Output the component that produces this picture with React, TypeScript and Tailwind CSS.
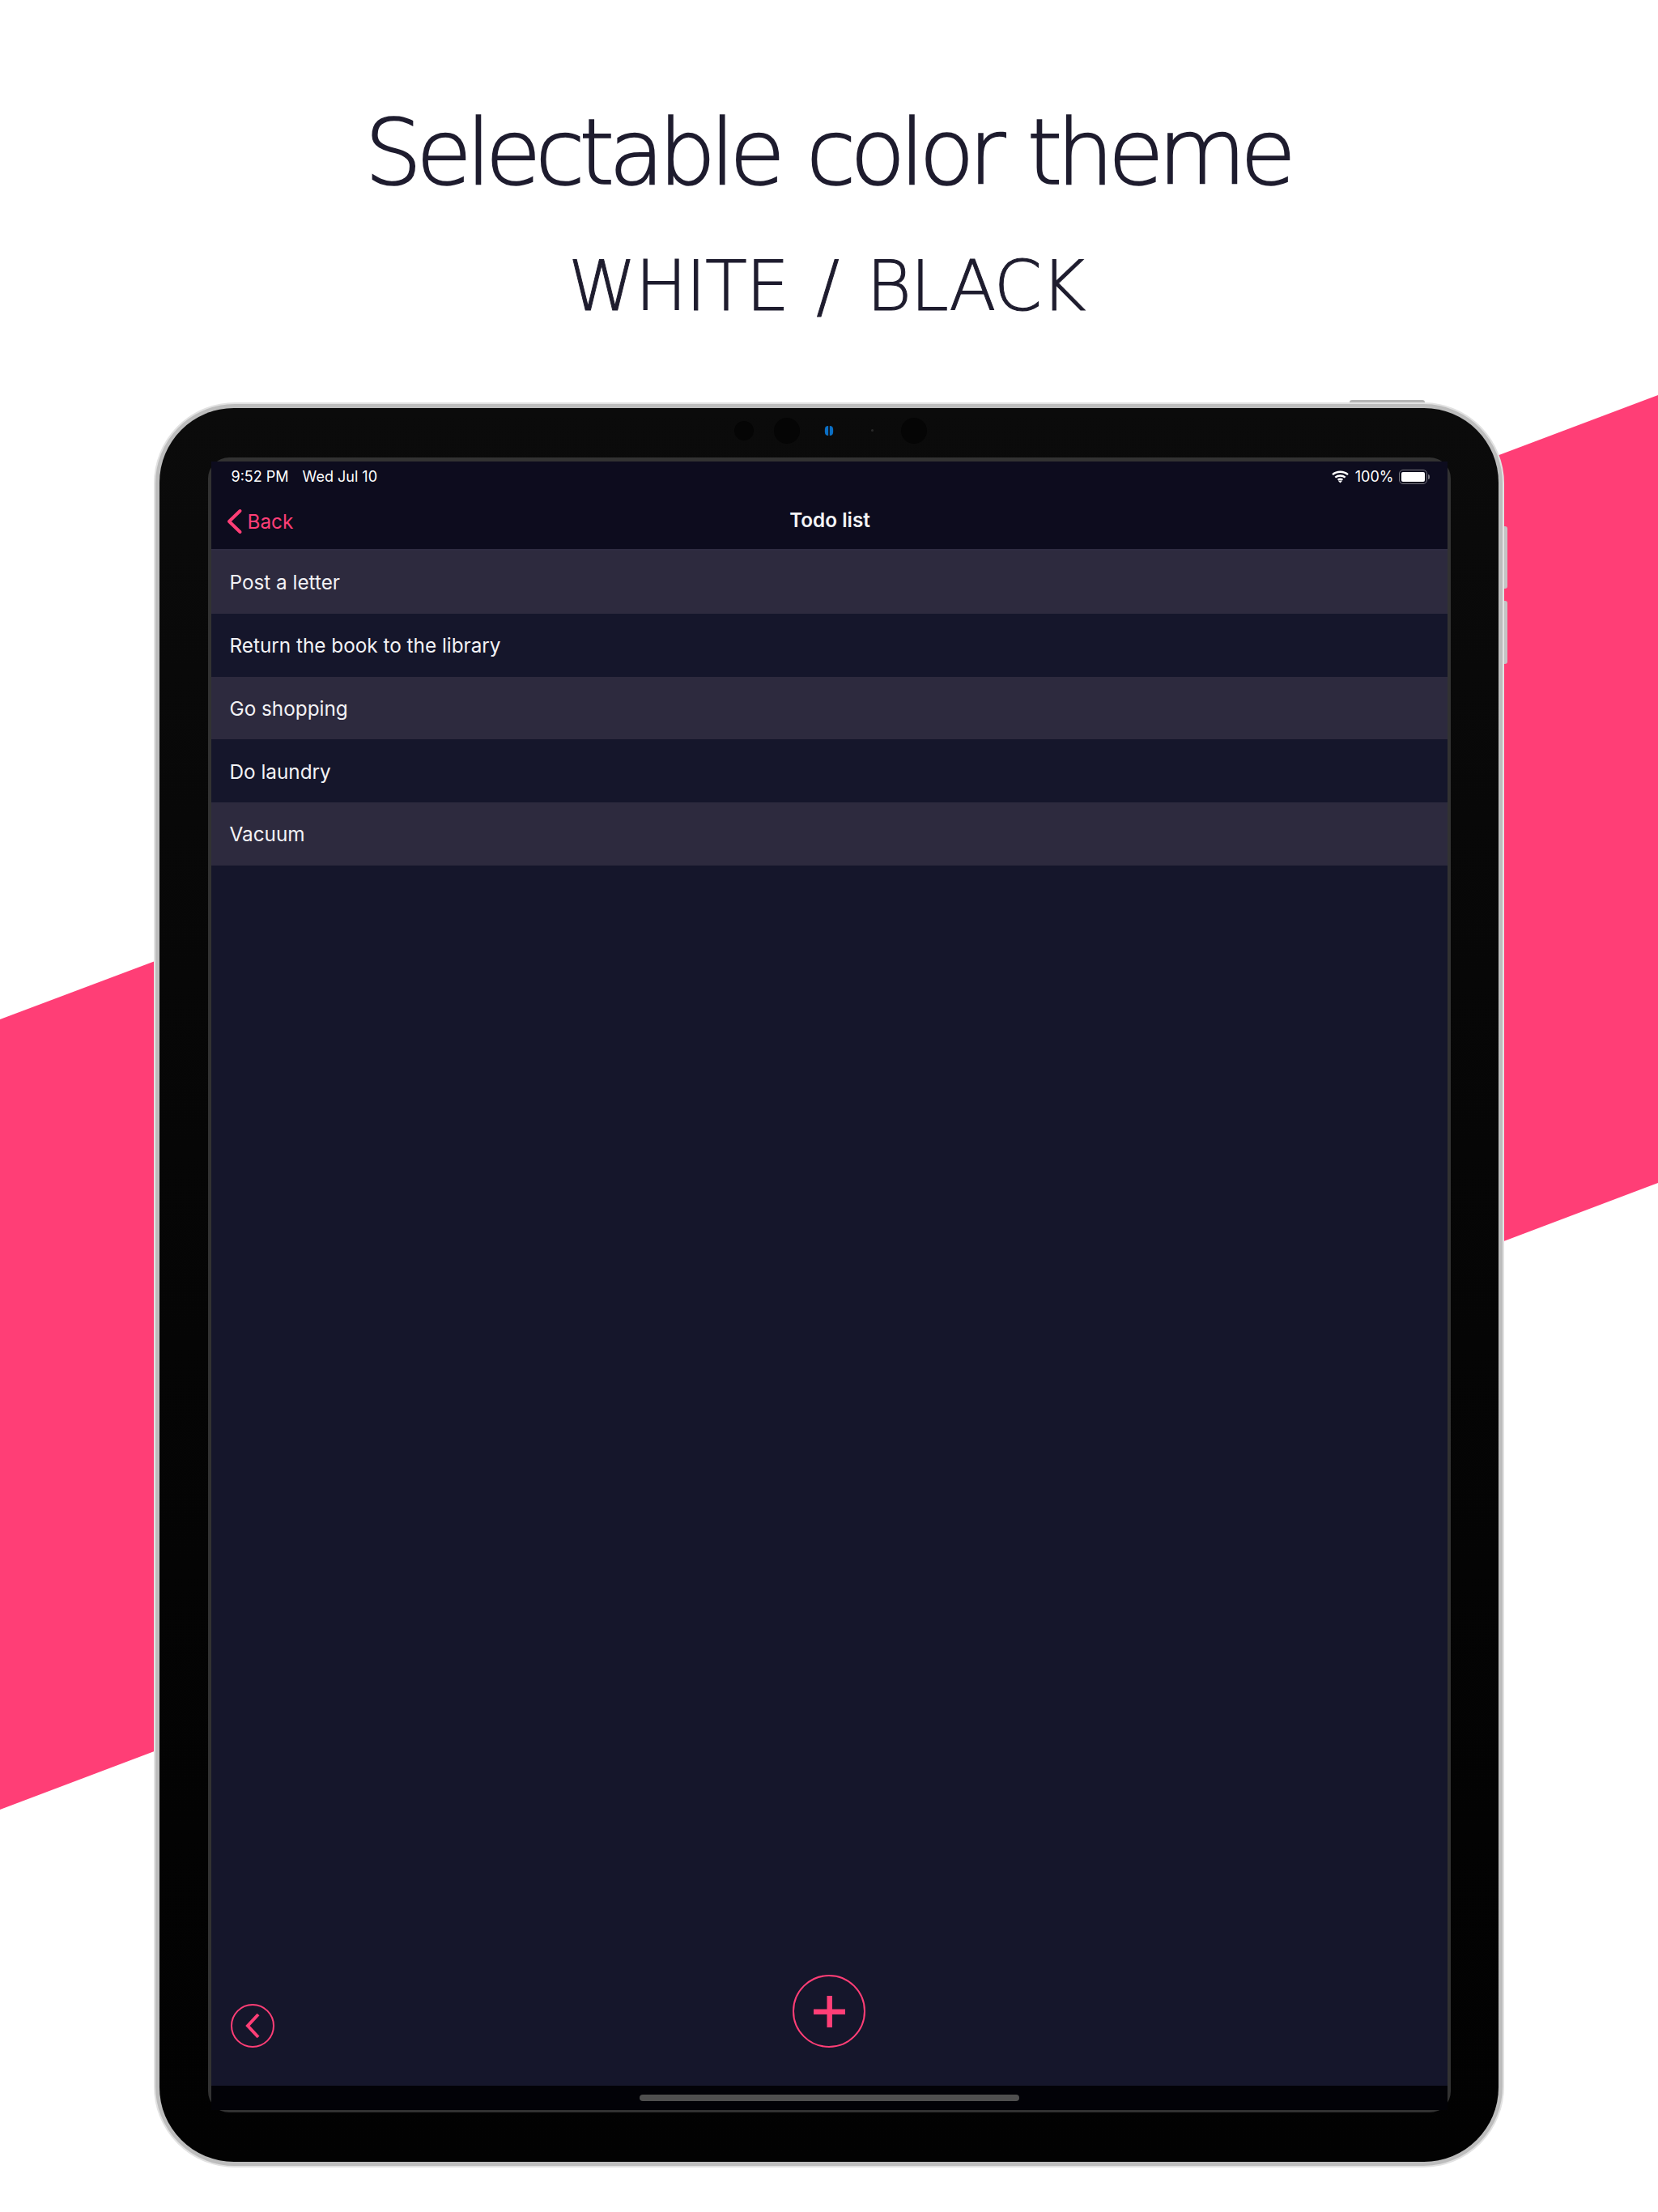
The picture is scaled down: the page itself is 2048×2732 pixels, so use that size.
const todos = ['Post a letter', 'Return the book to the library', 'Go shopping', 'Do laundry', 'Vacuum'];

function WifiIcon() {
  return (
    <svg width="21" height="16" viewBox="0 0 21 16" fill="none" stroke="#fff" strokeWidth="2.4">
      <path d="M1 5.2C6.4 .6 14.6 .6 20 5.2" />
      <path d="M4.3 8.6C7.8 5.8 13.2 5.8 16.7 8.6" />
      <path d="M7.6 11.8C9.3 10.6 11.7 10.6 13.4 11.8" />
      <path d="M10.5 15.6 8.2 13.2C9.6 12.4 11.4 12.4 12.8 13.2Z" fill="#fff" stroke="none" />
    </svg>
  );
}

function Battery() {
  return (
    <div className="flex items-center ml-[6px]">
      <div className="w-[35px] h-[18px] rounded-[5px] border border-[#77767f] p-[2px]">
        <div className="w-full h-full rounded-[2px] bg-white" />
      </div>
      <div className="ml-[1px] w-[2px] h-[6px] rounded-r-full bg-[#77767f]" />
    </div>
  );
}

function TodoRow({ label, striped }: { label: string; striped: boolean }) {
  return (
    <div className={`h-[77.8px] flex items-center pl-[23px] pt-[1px] text-[24.3px] text-[#f2f2f5] ${striped ? 'bg-[#2d2a3e]' : 'bg-[#15162b]'}`}>
      {label}
    </div>
  );
}

export default function App() {
  return (
    <div className="relative w-[2048px] h-[2732px] overflow-hidden bg-white font-['Inter',sans-serif]">
      {/* diagonal band behind the tablet */}
      <svg className="absolute inset-0" width="2048" height="2732" viewBox="0 0 2048 2732">
        <polygon points="0,1259 2048,488 2048,1461 0,2235" fill="#ff3e76" />
      </svg>

      <div className="relative">
        <header className="h-[497px] text-center text-[#1e1c2e] font-['DejaVu_Sans',sans-serif] font-extralight">
          <h1 className="pt-[113px] pr-[4px] text-[112px] leading-[150px] tracking-[-7.3px] [word-spacing:5px] [-webkit-text-stroke:1.6px_#1e1c2e]">Selectable color theme</h1>
          <p className="mt-[31px] pr-[6px] text-[85px] leading-[120px] tracking-[-1.4px] [word-spacing:9px] [-webkit-text-stroke:1px_#1e1c2e]">WHITE / BLACK</p>
        </header>

        <div className="relative mx-auto w-[1668px] h-[2180px]">
          {/* hardware buttons */}
          <div className="absolute left-[1477px] -top-[3px] w-[93px] h-[6px] rounded-t-[3px] bg-[#b5b5b5]" />
          <div className="absolute -right-[4px] top-[153px] w-[8px] h-[77px] rounded-r-[3px] bg-[#c4c4c4]" />
          <div className="absolute -right-[4px] top-[245px] w-[8px] h-[78px] rounded-r-[3px] bg-[#c4c4c4]" />

          <div className="relative h-full rounded-[100px] bg-[#bdbdbd] border-2 border-[#e2e2e2] p-[5px]">
            <div className="flex flex-col items-center h-full rounded-[92px] bg-gradient-to-b from-[#0b0b0b] to-[#020202]">
              {/* camera strip */}
              <div className="h-[61px] w-full flex items-center pb-[6px]">
                <div className="ml-[710px] w-[24px] h-[24px] rounded-full bg-[#050505]" />
                <div className="ml-[25px] w-[32px] h-[32px] rounded-full bg-[#050505]" />
                <div className="ml-[30px] w-[12px] h-[12px] rounded-full flex justify-between px-[1px] bg-[#101a26]">
                  <div className="w-[4px] h-full rounded-l-full bg-[#0a6fc4]" />
                  <div className="w-[4px] h-full rounded-r-full bg-[#0a6fc4]" />
                </div>
                <div className="ml-[46px] w-[3px] h-[3px] rounded-full bg-[#2a2a2a]" />
                <div className="ml-[34px] w-[32px] h-[32px] rounded-full bg-[#050505]" />
              </div>

              <div className="w-[1535px] h-[2044px] rounded-[26px] border-x-[4px] border-t-[5px] border-b-[3px] border-[#323232]">
                <div className="flex flex-col h-full bg-[#15162b]">
                  <div className="h-[110px] shrink-0 bg-[#0d0c1e] border-b-2 border-[#2f2c42]">
                    <div className="h-[32px] flex items-end justify-between pl-[25px] pr-[22px] text-[18px] leading-[26px] text-white">
                      <div className="flex gap-[17px]">
                        <span>9:52 PM</span>
                        <span>Wed Jul 10</span>
                      </div>
                      <div className="flex items-center">
                        <WifiIcon />
                        <span className="ml-[8px]">100%</span>
                        <Battery />
                      </div>
                    </div>
                    <div className="relative h-[76px] flex items-center justify-center">
                      <div className="absolute left-[18px] top-[24px] flex items-center gap-[6px] text-[24.3px] text-[#ff3e76]">
                        <svg width="21" height="32" viewBox="0 0 21 32" fill="none" stroke="#ff3e76" strokeWidth="4" strokeLinecap="round" strokeLinejoin="round">
                          <path d="M17.5 3 4 16l13.5 13" />
                        </svg>
                        <span>Back</span>
                      </div>
                      <span className="pt-[4px] ml-[2px] text-[24.3px] font-semibold text-[#f4f4f6]">Todo list</span>
                    </div>
                  </div>

                  {todos.map((todo, i) => (
                    <TodoRow key={todo} label={todo} striped={i % 2 === 0} />
                  ))}

                  <div className="mt-auto grid grid-cols-3 items-end pb-[47px]">
                    <div className="ml-[24px] w-[54px] h-[54px] rounded-full border-2 border-[#ff3e76] flex items-center justify-center">
                      <svg width="18" height="32" viewBox="0 0 18 32" fill="none" stroke="#ff3e76" strokeWidth="4">
                        <path d="M16 2 3 16l13 14" />
                      </svg>
                    </div>
                    <div className="w-[90px] h-[90px] justify-self-center rounded-full border-2 border-[#ff3e76] flex items-center justify-center">
                      <svg width="39" height="39" viewBox="0 0 39 39" fill="#ff3e76">
                        <path d="M16.5 0h6.5v16.5H39V23H23v16h-6.5V23H0v-6.5h16.5z" />
                      </svg>
                    </div>
                  </div>

                  <div className="h-[30px] shrink-0 bg-[#020207] pt-[11px]">
                    <div className="mx-auto w-[469px] h-[8px] rounded-full bg-[#4f4f4f]" />
                  </div>
                </div>
              </div>
            </div>
          </div>
        </div>
      </div>
    </div>
  );
}
